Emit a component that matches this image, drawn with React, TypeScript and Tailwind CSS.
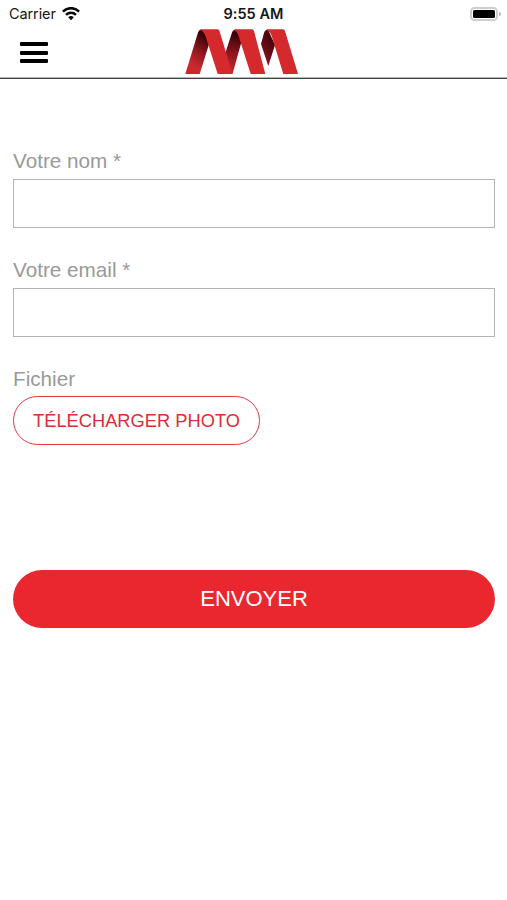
function Logo() {
  return (
    <svg width="114" height="47" viewBox="185 28 114 47" aria-label="Logo">
      <defs>
        <linearGradient id="legLeft" gradientUnits="userSpaceOnUse" x1="189" y1="62" x2="206" y2="38">
          <stop offset="0" stopColor="#cb282d" />
          <stop offset="0.5" stopColor="#8f1820" />
          <stop offset="1" stopColor="#3c0308" />
        </linearGradient>
        <linearGradient id="legMiddle" gradientUnits="userSpaceOnUse" x1="230" y1="70" x2="239" y2="36">
          <stop offset="0" stopColor="#c3252b" />
          <stop offset="0.5" stopColor="#8a151f" />
          <stop offset="1" stopColor="#3c0308" />
        </linearGradient>
        <linearGradient id="legRight" gradientUnits="userSpaceOnUse" x1="261" y1="50" x2="273" y2="40">
          <stop offset="0" stopColor="#7b101b" />
          <stop offset="1" stopColor="#42040b" />
        </linearGradient>
      </defs>
      <path d="M185.300 74 198 32.500Q199 29.400 202 29.400L210 41 199.700 74Z" fill="url(#legLeft)" />
      <path d="M225 54 232 32.500Q233 29.400 236 29.400L242 40 232.500 74H229Z" fill="url(#legMiddle)" />
      <path d="M261 44 264 33Q265 29.400 268 29.400L275 45 268.300 66Z" fill="url(#legRight)" />
      <path d="M201 29.300H217.500Q219 29.300 219.500 31L232.500 74H217.700L205.500 36Q204 31 200 30Z" fill="#d42a2e" />
      <path d="M235.500 29.300H252Q253.500 29.300 254 31L265.300 74H250.700L238.600 36Q237 31 234 30Z" fill="#d42a2e" />
      <path d="M268 29.300H283Q284.500 29.300 285 31L298 74H283.300L271.700 36Q270 31 266 30Z" fill="#d42a2e" />
    </svg>
  );
}

function Wifi() {
  return (
    <svg width="18" height="14" viewBox="0 0 18 14" fill="none" stroke="#080808" strokeWidth="2.500">
      <path d="M.9 4.600C5.300 0 12.700 0 17.100 4.600" />
      <path d="M4 7.900C6.800 5.100 11.200 5.100 14 7.900" />
      <path d="M6.200 10.200Q9 7.700 11.800 10.200L9 13.200Z" fill="#080808" stroke="none" />
    </svg>
  );
}

function StatusBar() {
  return (
    <div className="grid h-[27px] grid-cols-[1fr_auto_1fr] items-center font-[Inter,sans-serif] text-[14.500px] leading-none text-[#161616]">
      <div className="flex items-center gap-[5px] pl-[9px]">
        <span className="w-[48px] whitespace-nowrap pt-[2px] tracking-[-0.1px]">Carrier</span>
        <Wifi />
      </div>
      <span className="pt-[2px] font-semibold tracking-[0.05px]">9:55 AM</span>
      <div className="flex items-center justify-end pr-[6px]">
        <div className="h-[14px] w-[28px] rounded-[4.500px] border-2 border-[#cdcdcd] p-px">
          <div className="h-[8px] rounded-[1.500px] bg-black" />
        </div>
        <div className="ml-px h-[4px] w-[2px] rounded-r-full bg-[#b5b5b5]" />
      </div>
    </div>
  );
}

function Field({ label }: { label: string }) {
  return (
    <label className="block h-[109px]">
      <span className="block h-[27px] text-[20.700px] leading-[18px] text-[#999]">{label}</span>
      <input className="block h-[49px] w-full border border-[#b3b3b3] bg-white px-3 text-[20px] outline-none" />
    </label>
  );
}

export default function App() {
  return (
    <div className="h-[900px] w-full overflow-hidden bg-white font-['Liberation_Sans',Arial,sans-serif]">
      <StatusBar />
      <header className="grid h-[52px] grid-cols-[1fr_auto_1fr] border-b border-[#414144] shadow-[inset_0_-1px_0_#b8b8b8]">
        <button aria-label="Menu" className="ml-[20px] mt-[15px] flex h-[21px] w-[28px] flex-col justify-between">
          <span className="h-[4px] w-full rounded-[1px] bg-black" />
          <span className="h-[4px] w-full rounded-[1px] bg-black" />
          <span className="h-[4px] w-full rounded-[1px] bg-black" />
        </button>
        <div className="-ml-[23px] mt-px">
          <Logo />
        </div>
      </header>
      <form className="pl-[13px] pt-[73px] pr-[12px]">
        <Field label="Votre nom *" />
        <Field label="Votre email *" />
        <span className="block h-[26px] text-[20.700px] leading-[18px] text-[#999]">Fichier</span>
        <button type="button" className="flex h-[49px] w-[247px] items-center justify-center rounded-full border border-[#de3841] text-[18.300px] text-[#de2c36]">
          <span className="whitespace-nowrap">TÉLÉCHARGER PHOTO</span>
        </button>
        <button type="button" className="mt-[125px] flex h-[58px] w-full items-center justify-center rounded-full bg-[#ea262f] pb-[2px] text-[22px] text-white">
          ENVOYER
        </button>
      </form>
    </div>
  );
}
